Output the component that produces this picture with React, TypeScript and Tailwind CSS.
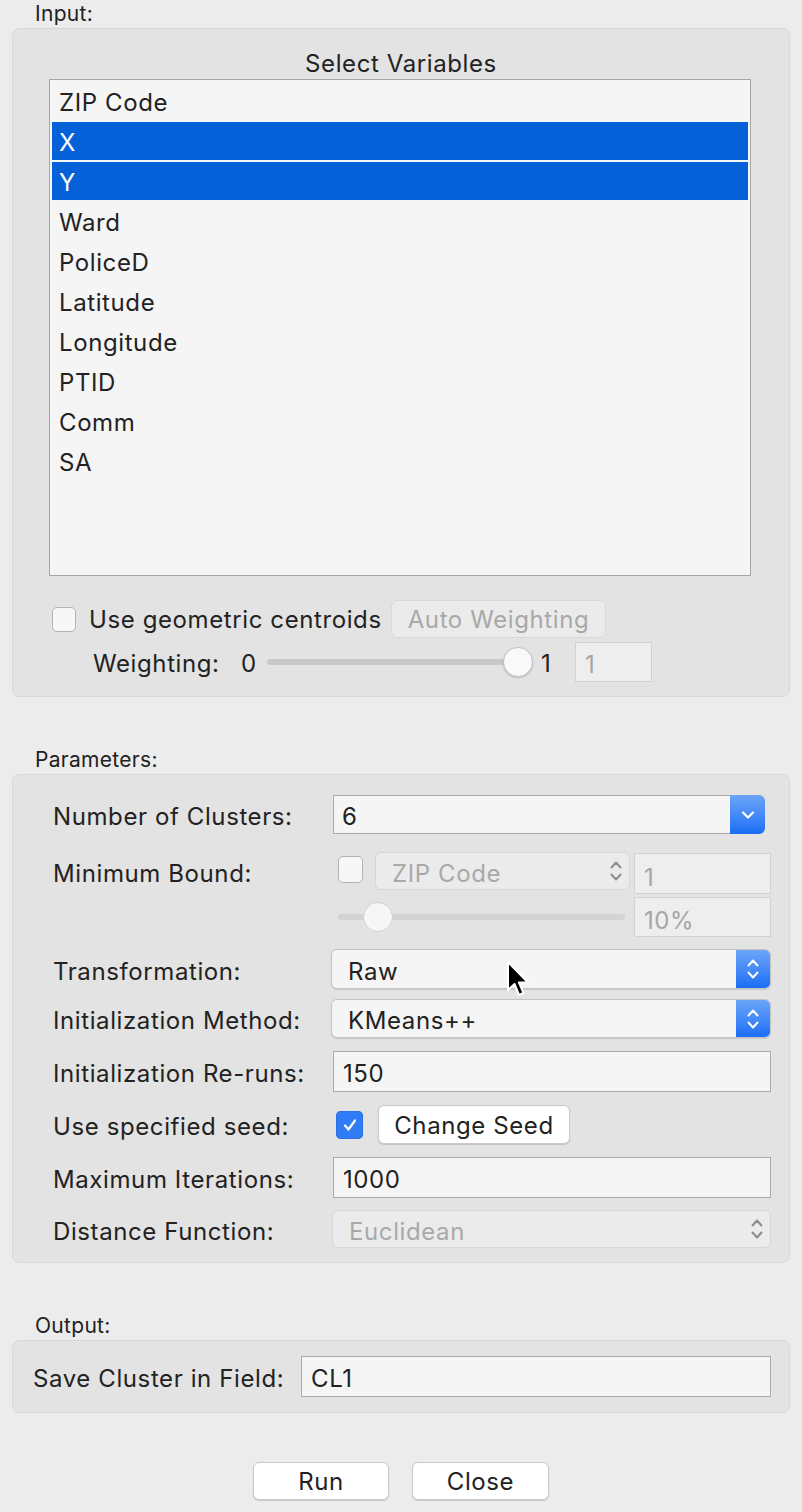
import React from 'react'

const font = { fontFamily: 'Inter, "Liberation Sans", sans-serif' }

const vars = ['ZIP Code', 'X', 'Y', 'Ward', 'PoliceD', 'Latitude', 'Longitude', 'PTID', 'Comm', 'SA']
const selected = ['X', 'Y']

const txt = 'text-[24px] leading-[28px] tracking-[0.6px]'

const Chevron = ({ color = 'white' }: { color?: string }) => (
  <svg width="14" height="10" viewBox="0 0 14 10">
    <path d="M2 2.5 L7 7.5 L12 2.5" fill="none" stroke={color} strokeWidth="2.2" strokeLinecap="round" strokeLinejoin="round" />
  </svg>
)

const UpDown = ({ color = 'white' }: { color?: string }) => (
  <svg width="14" height="24" viewBox="0 0 14 24">
    <path d="M2.5 8.5 L7 3.5 L11.5 8.5" fill="none" stroke={color} strokeWidth="2" strokeLinecap="round" strokeLinejoin="round" />
    <path d="M2.5 15.5 L7 20.5 L11.5 15.5" fill="none" stroke={color} strokeWidth="2" strokeLinecap="round" strokeLinejoin="round" />
  </svg>
)

const Checkbox = ({ checked = false, className = '' }: { checked?: boolean; className?: string }) =>
  checked ? (
    <div className={`flex items-center justify-center rounded-[5px] bg-[#2f7cf6] shadow-[inset_0_0_0_1px_#2a6fe0] ${className}`}>
      <svg width="16" height="16" viewBox="0 0 16 16">
        <path d="M3 8.5 L6.5 12.5 L13 3.5" fill="none" stroke="white" strokeWidth="2.2" strokeLinecap="round" strokeLinejoin="round" />
      </svg>
    </div>
  ) : (
    <div className={`rounded-[5px] border border-[#b3b3b3] bg-[#f7f7f7] ${className}`} />
  )

const Field = ({ value, disabled = false, className = '' }: { value: string; disabled?: boolean; className?: string }) => (
  <div
    className={`flex items-center pl-[9px] pt-[5px] ${txt} ${
      disabled ? 'border border-[#d2d2d2] bg-[#eeeeee] text-[#a6a6a6]' : 'border border-[#a9a9a9] bg-[#f5f5f5] text-[#222]'
    } ${className}`}
  >
    {value}
  </div>
)

const PopUp = ({ value, disabled = false, className = '' }: { value: string; disabled?: boolean; className?: string }) =>
  disabled ? (
    <div className={`flex items-center justify-between rounded-[6px] border border-[#d6d6d6] bg-[#ebebeb] pl-[16px] pr-[6px] ${txt} text-[#a9a9a9] ${className}`}>
      <span className="pt-[5px]">{value}</span>
      <UpDown color="#8c8c8c" />
    </div>
  ) : (
    <div className={`flex overflow-hidden rounded-[6px] border border-[#c3c3c3] bg-[#f5f5f5] shadow-[0_1px_1px_rgba(0,0,0,0.12)] ${className}`}>
      <div className={`flex flex-1 items-center pl-[16px] pt-[5px] ${txt} text-[#222]`}>{value}</div>
      <div className="flex w-[34px] items-center justify-center bg-gradient-to-b from-[#6ba5f8] to-[#1a6df5]">
        <UpDown />
      </div>
    </div>
  )

const Button = ({ label, disabled = false, className = '' }: { label: string; disabled?: boolean; className?: string }) => (
  <div
    className={`flex items-center justify-center rounded-[6px] pt-[2px] ${txt} ${
      disabled
        ? 'border border-[#d8d8d8] bg-[#ebebeb] text-[#a8a8a8]'
        : 'border border-[#c9c9c9] bg-white text-[#222] shadow-[0_1px_1px_rgba(0,0,0,0.15)]'
    } ${className}`}
  >
    {label}
  </div>
)

const Slider = ({ width, knobAt, disabled = false }: { width: number; knobAt: number; disabled?: boolean }) => (
  <div className="relative h-[32px]" style={{ width }}>
    <div className={`absolute left-0 right-0 top-[13px] h-[6px] rounded-full ${disabled ? 'bg-[#d3d3d3]' : 'bg-[#c8c8c8]'}`} />
    <div
      className={`absolute top-[1px] h-[30px] w-[30px] rounded-full border ${
        disabled ? 'border-[#d2d2d2] bg-[#f6f6f6]' : 'border-[#c4c4c4] bg-[#f9f9f9] shadow-[0_1px_2px_rgba(0,0,0,0.2)]'
      }`}
      style={{ left: knobAt - 15 }}
    />
  </div>
)

const SectionLabel = ({ text, h }: { text: string; h: number }) => (
  <div className="flex items-end pb-[2px] pl-[35px] text-[21px] leading-[24px] tracking-[0.3px] text-[#222]" style={{ height: h }}>
    {text}
  </div>
)

const Row = ({ label, children, className = '' }: { label: string; children: React.ReactNode; className?: string }) => (
  <div className={`flex items-center ${className}`}>
    <div className={`w-[278px] shrink-0 pt-[5px] ${txt} text-[#222]`}>{label}</div>
    {children}
  </div>
)

export default function App() {
  return (
    <div className="relative h-[1512px] w-[802px] overflow-hidden bg-[#ececec]" style={font}>
      <SectionLabel text="Input:" h={28} />

      {/* Input panel */}
      <div className="mx-[12px] h-[669px] rounded-[7px] border border-[#d8d8d8] bg-[#e3e3e3]">
        <div className={`pt-[21px] text-center ${txt} text-[#222]`}>Select Variables</div>
        <div className="ml-[36px] mt-[1px] h-[497px] w-[702px] border border-[#a6a6a6] bg-[#f5f5f5] px-[2px] pt-[2px]">
          {vars.map((v) => (
            <div key={v} className="h-[40px]">
              <div
                className={`flex h-[38px] items-center pl-[7px] pt-[4px] ${txt} ${
                  selected.includes(v) ? 'bg-[#0461d8] text-white' : 'text-[#222]'
                }`}
              >
                {v}
              </div>
            </div>
          ))}
        </div>

        <div className="ml-[39px] mt-[24px] flex h-[38px] items-center">
          <Checkbox className="h-[25px] w-[24px]" />
          <span className={`ml-[13px] w-[302px] pt-[2px] ${txt} text-[#222]`}>Use geometric centroids</span>
          <Button label="Auto Weighting" disabled className="h-[38px] w-[215px]" />
        </div>

        <div className={`ml-[80px] mt-[4px] flex h-[40px] items-center ${txt} text-[#222]`}>
          <span className="w-[148px] pt-[4px]">Weighting:</span>
          <span className="w-[26px] pt-[4px]">0</span>
          <Slider width={266} knobAt={251} />
          <span className="ml-[8px] w-[34px] pt-[4px]">1</span>
          <Field value="1" disabled className="h-[40px] w-[77px]" />
        </div>
      </div>

      <SectionLabel text="Parameters:" h={77} />

      {/* Parameters panel */}
      <div className="mx-[12px] h-[489px] rounded-[7px] border border-[#d8d8d8] bg-[#e3e3e3] pl-[40px] pt-[20px]">
        <Row label="Number of Clusters:">
          <div className="ml-[2px] flex h-[39px] w-[432px]">
            <div className={`flex flex-1 items-center border border-r-0 border-[#a9a9a9] bg-[#f5f5f5] pl-[8px] pt-[5px] ${txt} text-[#222]`}>6</div>
            <div className="flex w-[35px] items-center justify-center rounded-r-[6px] bg-gradient-to-b from-[#6ba5f8] to-[#1a6df5]">
              <Chevron />
            </div>
          </div>
        </Row>

        <div className="mt-[18px] flex">
          <div className={`flex h-[38px] w-[278px] shrink-0 items-center pt-[5px] ${txt} text-[#222]`}>Minimum Bound:</div>
          <div>
            <div className="flex items-start">
              <Checkbox className="ml-[7px] mt-[4px] h-[27px] w-[25px]" />
              <PopUp value="ZIP Code" disabled className="ml-[12px] h-[38px] w-[255px]" />
              <Field value="1" disabled className="ml-[4px] mt-[1px] h-[41px] w-[137px] pt-[8px]" />
            </div>
            <div className="mt-[3px] flex items-center">
              <div className="ml-[7px]">
                <Slider width={287} knobAt={40} disabled />
              </div>
              <Field value="10%" disabled className="ml-[9px] h-[40px] w-[137px] pt-[8px]" />
            </div>
          </div>
        </div>

        <Row label="Transformation:" className="mt-[12px]">
          <PopUp value="Raw" className="h-[40px] w-[440px]" />
        </Row>
        <Row label="Initialization Method:" className="mt-[10px]">
          <PopUp value="KMeans++" className="h-[39px] w-[440px]" />
        </Row>
        <Row label="Initialization Re-runs:" className="mt-[13px]">
          <Field value="150" className="ml-[2px] h-[41px] w-[438px]" />
        </Row>
        <Row label="Use specified seed:" className="mt-[13px]">
          <Checkbox checked className="ml-[5px] h-[28px] w-[27px]" />
          <Button label="Change Seed" className="ml-[15px] h-[39px] w-[192px]" />
        </Row>
        <Row label="Maximum Iterations:" className="mt-[13px]">
          <Field value="1000" className="ml-[2px] h-[41px] w-[438px]" />
        </Row>
        <Row label="Distance Function:" className="mt-[12px]">
          <PopUp value="Euclidean" disabled className="ml-[1px] h-[38px] w-[439px]" />
        </Row>
      </div>

      <SectionLabel text="Output:" h={77} />

      {/* Output panel */}
      <div className="mx-[12px] flex h-[73px] items-center rounded-[7px] border border-[#d8d8d8] bg-[#e3e3e3] pl-[20px]">
        <span className={`w-[268px] shrink-0 pt-[5px] ${txt} text-[#222]`}>Save Cluster in Field:</span>
        <Field value="CL1" className="h-[41px] w-[470px]" />
      </div>

      <div className="mt-[49px] flex justify-center gap-[23px]">
        <Button label="Run" className="h-[38px] w-[136px]" />
        <Button label="Close" className="h-[38px] w-[137px]" />
      </div>

      {/* mouse pointer */}
      <svg className="absolute left-[505px] top-[960px]" width="30" height="40" viewBox="0 0 30 40">
        <path d="M3 2 L3 30 L9.5 24 L14 35 L18.5 33 L14 22.5 L23 22.5 Z" fill="black" stroke="white" strokeWidth="2" strokeLinejoin="round" />
      </svg>
    </div>
  )
}
